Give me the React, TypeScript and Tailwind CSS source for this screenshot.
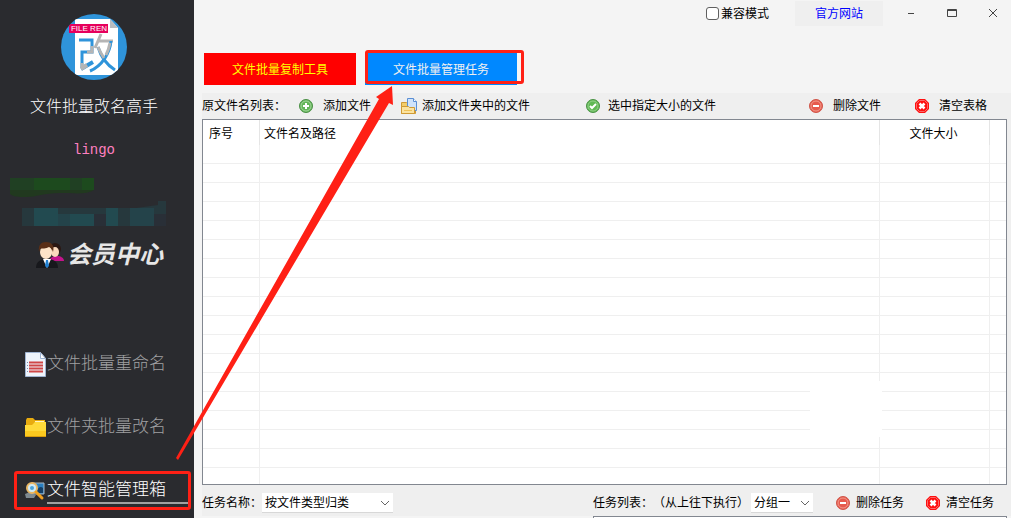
import React, { useState } from 'react';
import clsx from 'clsx';

type IconProps = { className?: string };

function LogoIcon() {
  return (
    <svg viewBox="0 0 66 66" className="size-[66px] shrink-0" role="img" aria-label="logo">
      <defs>
        <clipPath id="logo-clip">
          <circle cx="33" cy="33" r="33" />
        </clipPath>
      </defs>
      <g clipPath="url(#logo-clip)">
        <rect width="66" height="66" fill="#2f94da" />
        <path d="M14 5h35l8 9v47H14z" fill="#fff" />
        <path d="M49 5v9h8z" fill="#b9bcc0" />
        <rect x="8" y="10" width="39" height="9" fill="#e6005c" />
        <g fill="none" strokeWidth="3">
          <path d="M18 26h13v12H21v16" stroke="#2f94da" />
          <path d="M20 55l12-7" stroke="#2f94da" strokeWidth="4" />
          <path d="M20 55l6-4" stroke="#b5b5b5" strokeWidth="4" />
          <path d="M21 49v5" stroke="#b5b5b5" />
          <path d="M26 38h5v-6" stroke="#b5b5b5" />
          <path d="M40 20l-6 14M37 27h15" stroke="#b5b5b5" />
          <path d="M50 27c-1 12-9 25-21 30" stroke="#2f94da" />
          <path d="M49 29c-1 5-2 8-4 12" stroke="#b5b5b5" />
          <path d="M37 33c3 10 9 18 17 23" stroke="#2f94da" />
          <path d="M37 33c2 5 4 8 6 11" stroke="#b5b5b5" />
        </g>
        <text x="28" y="17" textAnchor="middle" fontSize="8" fill="#fff" fontFamily="Liberation Sans, sans-serif">
          FILE REN
        </text>
      </g>
    </svg>
  );
}

function BlurredAccount() {
  return (
    <svg viewBox="0 0 160 54" className="w-[160px] h-[54px]" aria-hidden="true">
      <path d="M0 2h84v12c-8 5-20 3-34 3-16 0-24 4-34 4-8 0-12 0-16-3z" fill="#21391f" />
      <path d="M0 2h24v12H0zM60 2h12v12H60z" fill="#204023" />
      <path d="M24 2h12v12H24zM36 2h24v12H36zM72 2h12v12H72z" fill="#1d4a1e" />
      <path d="M12 32h114l22-3v-4h8v25H12z" fill="#26383d" />
      <path d="M24 32h24v18H24zM60 38h24v12H60zM96 32h12v18H96z" fill="#224a50" />
      <path d="M48 38h12v12H48zM120 32h24v18h-24z" fill="#24434a" />
      <path d="M84 38h12v12H84zM144 38h12v12h-12z" fill="#292f37" />
    </svg>
  );
}

function MembersIcon() {
  return (
    <svg viewBox="0 0 30 28" className="w-[30px] h-7 shrink-0" aria-hidden="true">
      <path d="M14 20c1-4 5-5 8-5 4 0 7 2 7 5H14z" fill="#c4148c" />
      <circle cx="20" cy="8" r="6" fill="#2b1712" />
      <ellipse cx="20" cy="11" rx="4" ry="5" fill="#fbd9bd" />
      <path d="M1 27c0-6 4-9 11-9s11 3 11 9z" fill="#17181c" />
      <path d="M8 18h8l-4 9z" fill="#fff" />
      <path d="M11 19h2l1 6-2 2-2-2z" fill="#1f7fd1" />
      <ellipse cx="11" cy="11" rx="6" ry="7" fill="#fde3c8" />
      <path d="M4 11C3 4 6 1 11 1s9 3 7 10c-1-3-2-4-4-5-3 2-7 1-9 2z" fill="#5a2f17" />
    </svg>
  );
}

function DocumentIcon({ className }: IconProps) {
  return (
    <svg viewBox="0 0 22 26" className={clsx('w-[22px] h-[26px]', className)} aria-hidden="true">
      <path d="M.5.5h15l5 6v18H.5z" fill="#eef4fb" stroke="#9fb4d2" />
      <path d="M15.500.5v6h5z" fill="#fff" stroke="#9fb4d2" />
      <path d="M2 10.500h1M2 13.500h1M2 16.500h1M2 19.500h1" stroke="#7b90b5" />
      <path d="M4 10.500h14M4 13.500h14M4 16.500h14M4 19.500h14" stroke="#cf4747" strokeWidth="2" />
    </svg>
  );
}

function FolderIcon({ className }: IconProps) {
  return (
    <svg viewBox="0 0 22 22" className={clsx('size-[22px]', className)} aria-hidden="true">
      <path d="M1 3l1-2h6l2 2h10v8H1z" fill="#e8ab0f" />
      <path d="M10 4h9v3h-9z" fill="#fff3c4" />
      <path d="M0 8h7l3-3h11v15H0z" fill="#ffda3a" />
      <path d="M0 14h21v6H0z" fill="#fbc91f" />
      <path d="M0 19h21v1H0z" fill="#d99c0c" />
    </svg>
  );
}

function SearchBoxIcon({ className }: IconProps) {
  return (
    <svg viewBox="0 0 22 20" className={clsx('w-[22px] h-5', className)} aria-hidden="true">
      <path d="M7 2h12v11H7z" fill="#2a7fc0" stroke="#a9b6bf" />
      <path d="M12 10c1-4 4-5 6-3v5h-6z" fill="#153f66" />
      <path d="M0 13l5-2 6 3-2 3H1z" fill="#7f8a91" />
      <circle cx="7" cy="7" r="5" fill="#cfeaf8" stroke="#e9b765" strokeWidth="2" />
      <circle cx="7" cy="7" r="2" fill="#4ba3d9" />
      <path d="M11 11l6 6" stroke="#f0a020" strokeWidth="3" strokeLinecap="round" />
    </svg>
  );
}

function AddIcon() {
  return (
    <svg viewBox="0 0 14 14" className="size-3.5" aria-hidden="true">
      <circle cx="7" cy="7" r="6.500" fill="#62b558" stroke="#4a8f45" />
      <circle cx="7" cy="7" r="5" fill="none" stroke="#a3d79b" />
      <path d="M7 4v6M4 7h6" stroke="#fff" strokeWidth="2" />
    </svg>
  );
}

function CheckIcon() {
  return (
    <svg viewBox="0 0 14 14" className="size-3.5" aria-hidden="true">
      <circle cx="7" cy="7" r="6.500" fill="#5fb954" stroke="#4a9145" />
      <circle cx="7" cy="7" r="5" fill="none" stroke="#93d089" />
      <path d="M4 7l2 2 4-4" fill="none" stroke="#fff" strokeWidth="2" />
    </svg>
  );
}

function MinusIcon() {
  return (
    <svg viewBox="0 0 14 14" className="size-3.5" aria-hidden="true">
      <circle cx="7" cy="7" r="6.500" fill="#e65a4d" stroke="#cf5549" />
      <circle cx="7" cy="7" r="5" fill="none" stroke="#f29a8c" />
      <path d="M4 7h6" stroke="#fff" strokeWidth="2" />
    </svg>
  );
}

function ClearIcon() {
  return (
    <svg viewBox="0 0 14 14" className="size-3.5" aria-hidden="true">
      <path d="M4 0h6l4 4v6l-4 4H4l-4-4V4z" fill="#ff1010" />
      <path d="M4.500 1.500h5l3 3v5l-3 3h-5l-3-3v-5z" fill="none" stroke="#f86a6a" />
      <path d="M4.500 4.500l5 5M9.500 4.500l-5 5" stroke="#fff" strokeWidth="2.500" />
    </svg>
  );
}

function AddFolderIcon() {
  return (
    <svg viewBox="0 0 17 17" className="size-[17px]" aria-hidden="true">
      <path d="M.5 4.500h5l1 1h8v10H.5z" fill="#f3cd6b" stroke="#d09a35" />
      <path d="M6.500.5h6l3 3v9h-9z" fill="#cfe3fb" stroke="#5b8fd4" />
      <path d="M12.500.5v3h3" fill="#fff" stroke="#5b8fd4" />
      <path d="M.5 8.500h7l1 1h5v6H.5z" fill="#fbe3a0" stroke="#d09a35" />
      <path d="M3 12.500h8" stroke="#efc158" />
    </svg>
  );
}

const navItems = [
  { label: '文件批量重命名', icon: DocumentIcon },
  { label: '文件夹批量改名', icon: FolderIcon },
  { label: '文件智能管理箱', icon: SearchBoxIcon },
];

function Sidebar() {
  const [active, setActive] = useState(2);

  return (
    <aside className="w-[194px] shrink-0 flex flex-col bg-[#2a2b2f] pt-3.5 pb-2">
      <div className="pr-1.5 flex flex-col items-center">
        <LogoIcon />
        <h1 className="mt-4 text-base leading-[22px] font-light text-white">文件批量改名高手</h1>
        <p className="mt-[22px] text-sm leading-5 text-[#ff80c0] font-['Liberation_Mono',monospace]">lingo</p>
      </div>
      <div className="mt-4 pl-2.5">
        <BlurredAccount />
      </div>
      <button className="mt-2 h-[34px] pl-[35px] flex items-center gap-0.5 text-2xl leading-8 font-bold italic text-[#e6e6e6]">
        <MembersIcon />
        会员中心
      </button>

      <nav className="mt-auto w-full pl-3.5 pr-[3px] flex flex-col gap-6">
        {navItems.map(({ label, icon: Icon }, i) => (
          <button
            key={label}
            onClick={() => setActive(i)}
            className={clsx(
              'h-[39px] flex items-center pl-2 border-3 rounded-[3px] text-[17px] leading-6 font-light text-left',
              i === active ? 'border-[#ff2015] text-white' : 'border-transparent text-[#a0a0a2]'
            )}
          >
            <Icon className="shrink-0" />
            <span className={clsx('flex-1 border-b-2', i === active ? 'border-[#a0a0a0]' : 'border-transparent')}>
              {label}
            </span>
          </button>
        ))}
      </nav>
    </aside>
  );
}

function TitleBar() {
  return (
    <header className="h-[26px] flex items-center justify-end">
      <label className="flex items-center gap-0.5 pt-px">
        <input type="checkbox" className="appearance-none size-[13px] bg-white border border-[#606060] rounded-[3px] checked:bg-[#0067c0]" />
        兼容模式
      </label>
      <a href="#site" className="ml-[26px] w-[88px] pt-px leading-6 text-center bg-[#efefef] text-[#0000ff]">
        官方网站
      </a>
      <div className="ml-2.5 flex gap-[5px] text-[#444]">
        <button aria-label="最小化" className="w-9 h-6 flex items-center justify-center">
          <svg viewBox="0 0 10 10" className="size-2.5" stroke="currentColor">
            <path d="M2 5.500h6" />
          </svg>
        </button>
        <button aria-label="最大化" className="w-9 h-6 flex items-center justify-center">
          <svg viewBox="0 0 10 10" className="size-2.5" fill="none" stroke="currentColor">
            <path d="M.5 1.500h9v7h-9zM.5 2.500h9" />
          </svg>
        </button>
        <button aria-label="关闭" className="w-9 h-6 flex items-center justify-center">
          <svg viewBox="0 0 10 10" className="size-2.5" stroke="currentColor">
            <path d="M1 1l8 8M9 1l-8 8" />
          </svg>
        </button>
      </div>
    </header>
  );
}

function FileTable() {
  const rows = Array.from({ length: 18 });

  return (
    <div className="relative flex-1 min-h-0 mr-1 overflow-hidden bg-white border border-[#828790]">
      <table className="w-full table-fixed border-separate border-spacing-0">
        <thead>
          <tr className="h-[25px] text-left">
            <th className="w-[57px] pl-1.5 pt-0.5 pb-0 font-normal border-r border-[#e5e5e5]">序号</th>
            <th className="pl-1 pt-0.5 pb-0 font-normal border-r border-[#e5e5e5]">文件名及路径</th>
            <th className="w-[110px] pt-0.5 pb-0 pr-0.5 font-normal text-center border-r border-[#e5e5e5]">文件大小</th>
            <th className="w-4" />
          </tr>
        </thead>
        <tbody>
          {rows.map((_, i) => (
            <tr key={i} className="h-[19px]">
              <td className="p-0 border-r border-b border-[#efefef]" />
              <td className="p-0 border-r border-b border-[#efefef]" />
              <td className="p-0 border-r border-b border-[#efefef]" />
              <td className="p-0 border-b border-[#efefef]" />
            </tr>
          ))}
        </tbody>
      </table>
      {/* wiped area over the grid */}
      <div className="absolute right-[124px] bottom-[47px] w-[72px] h-14 bg-white" />
    </div>
  );
}

function Chevron() {
  return (
    <svg viewBox="0 0 10 6" className="absolute right-[3px] top-[7px] w-2.5 h-1.5 pointer-events-none" fill="none" stroke="#666" aria-hidden="true">
      <path d="M1 1l4 4 4-4" />
    </svg>
  );
}

export default function App() {
  return (
    <div className="relative h-screen flex overflow-hidden bg-[#f4f4f4] text-black text-xs font-['Liberation_Sans','Noto_Sans_CJK_SC',sans-serif] [text-spacing-trim:space-all]">
      <Sidebar />

      <main className="flex-1 min-w-0 flex flex-col pl-2">
        <TitleBar />

        <div className="mt-[27px] pl-0.5 flex gap-[9px]">
          <button className="w-[152px] h-8 pt-0.5 bg-[#ff0000] text-[#ffff00]">文件批量复制工具</button>
          <button className="relative w-[152px] h-8 pt-0.5 bg-[#0088ff] text-[#f0f0f0]">
            文件批量管理任务
            <span className="absolute -top-[3px] left-0 w-[159px] h-[34px] border-3 border-[#ff2015] rounded-[3px]" />
          </button>
        </div>

        <div className="mt-2 h-[26px] shrink-0 flex items-center bg-[#efefef] pr-6 whitespace-nowrap">
          <span className="w-[97px]">原文件名列表：</span>
          <button className="flex items-center gap-2.5">
            <AddIcon />
            添加文件
          </button>
          <button className="ml-[30px] flex items-center gap-1">
            <AddFolderIcon />
            添加文件夹中的文件
          </button>
          <button className="ml-14 flex items-center gap-2">
            <CheckIcon />
            选中指定大小的文件
          </button>
          <button className="ml-auto flex items-center gap-2.5">
            <MinusIcon />
            删除文件
          </button>
          <button className="ml-[34px] flex items-center gap-2.5">
            <ClearIcon />
            清空表格
          </button>
        </div>

        <div className="flex-1 min-h-0 flex flex-col bg-[#efefef]">
          <FileTable />
        </div>

        <div className="h-[31px] shrink-0 flex items-center bg-[#efefef] pt-1 pr-[17px] whitespace-nowrap">
          <label htmlFor="task-name" className="w-[60px]">任务名称：</label>
          <div className="relative">
            <select id="task-name" className="appearance-none w-[131px] h-5 pl-[3px] pt-px bg-white border-b border-[#d8d8d8]">
              <option>按文件类型归类</option>
            </select>
            <Chevron />
          </div>
          <label htmlFor="task-group" className="ml-auto w-[158px]">任务列表：（从上往下执行）</label>
          <div className="relative">
            <select id="task-group" className="appearance-none w-[62px] h-5 pl-[3px] pt-px bg-white border-b border-[#d8d8d8]">
              <option>分组一</option>
            </select>
            <Chevron />
          </div>
          <button className="ml-[23px] flex items-center gap-1.5">
            <MinusIcon />
            删除任务
          </button>
          <button className="ml-[22px] flex items-center gap-1.5">
            <ClearIcon />
            清空任务
          </button>
        </div>

        <div className="h-0.5 shrink-0 flex justify-end pr-1">
          <div className="w-[414px] bg-white border border-b-0 border-[#828790]" />
        </div>
      </main>

      {/* Guide arrow */}
      <svg viewBox="0 0 220 380" className="absolute left-[175px] top-[84px] w-[220px] h-[380px] pointer-events-none" aria-hidden="true">
        <path d="M217 2L201 13l3 2L1 374l2 2L214 19l4 2z" fill="#ff2015" />
      </svg>
    </div>
  );
}
